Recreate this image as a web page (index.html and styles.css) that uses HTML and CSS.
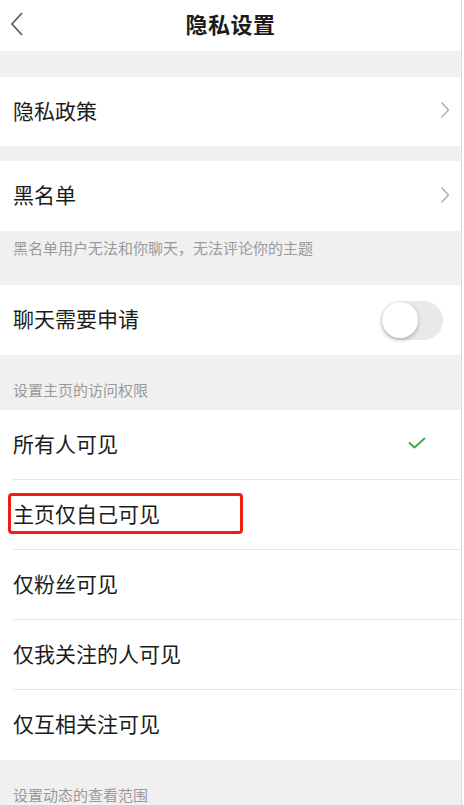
FILE: index.html
```html
<!DOCTYPE html>
<html lang="zh-CN">
<head>
    <meta charset="UTF-8">
    <meta name="viewport" content="width=device-width, initial-scale=1.0">
    <title>隐私设置</title>
    <link rel="stylesheet" href="styles.css">
</head>
<body>
    <div class="screen">
        <header class="nav-bar">
            <svg class="back" width="16" height="26" viewBox="0 0 16 26">
                <path d="M13 2 L3 13 L13 24" fill="none" stroke="#555" stroke-width="1.6"/>
            </svg>
            <h1>隐私设置</h1>
        </header>

        <div class="gap gap-top"></div>
        <div class="row row-first">
            <span class="label">隐私政策</span>
            <svg class="arrow" width="10" height="18" viewBox="0 0 10 18">
                <path d="M1.5 1.5 L8.5 9 L1.5 16.5" fill="none" stroke="#aaa" stroke-width="1.3"/>
            </svg>
        </div>

        <div class="gap gap-small"></div>
        <div class="row">
            <span class="label">黑名单</span>
            <svg class="arrow" width="10" height="18" viewBox="0 0 10 18">
                <path d="M1.5 1.5 L8.5 9 L1.5 16.5" fill="none" stroke="#aaa" stroke-width="1.3"/>
            </svg>
        </div>
        <div class="note note-tip">黑名单用户无法和你聊天，无法评论你的主题</div>

        <div class="row">
            <span class="label">聊天需要申请</span>
            <span class="switch"><span class="knob"></span></span>
        </div>

        <div class="note note-section">设置主页的访问权限</div>
        <ul class="options">
            <li class="row">
                <span class="label">所有人可见</span>
                <svg class="check" width="18" height="12" viewBox="0 0 18 12">
                    <path d="M1 5.5 L6.5 10.5 L17 1" fill="none" stroke="#2eaa4f" stroke-width="1.8"/>
                </svg>
            </li>
            <li class="row">
                <span class="label marked">主页仅自己可见</span>
            </li>
            <li class="row"><span class="label">仅粉丝可见</span></li>
            <li class="row"><span class="label">仅我关注的人可见</span></li>
            <li class="row"><span class="label">仅互相关注可见</span></li>
        </ul>

        <div class="note note-bottom">设置动态的查看范围</div>
    </div>
</body>
</html>
```

FILE: styles.css
```css
/* page */
body {
    margin: 0;
    background: #fff;
    font-family: "Noto Sans CJK SC", "Noto Sans", sans-serif;
    color: #1b1b1b;
}

.screen {
    width: 461px;
    height: 805px;
    overflow: hidden;
    background: #f0f0f0;
    border-right: 1px solid #d8d8d8;
}

/* top bar */
.nav-bar {
    height: 51px;
    background: #fff;
    display: flex;
    align-items: center;
    justify-content: center;
    position: relative;
}

.nav-bar h1 {
    margin: 0 0 6px;
    font-size: 22px;
    font-weight: 700;
    letter-spacing: 0.5px;
}

.nav-bar .back {
    position: absolute;
    left: 9px;
    top: 11px;
}

/* gaps and notes */
.gap-top {
    height: 26px;
}

.gap-small {
    height: 15px;
}

.note {
    color: #9a9a9a;
    font-size: 15px;
    padding-left: 13px;
    box-sizing: border-box;
}

.note-tip {
    height: 54px;
    padding-top: 6px;
}

.note-section {
    height: 55px;
    padding-top: 24px;
}

.note-bottom {
    height: 47px;
    padding-top: 24px;
}

/* rows */
.row {
    height: 70px;
    background: #fff;
    display: flex;
    align-items: center;
    justify-content: space-between;
    padding: 0 10px 3px 13px;
    box-sizing: border-box;
}

.row-first {
    height: 69px;
}

.label {
    font-size: 21px;
    line-height: 1;
}

.arrow {
    margin-right: 1px;
}

/* switch */
.switch {
    width: 62px;
    height: 39px;
    border-radius: 20px;
    background: #e9e9e9;
    position: relative;
    margin: 4px 8px 0 0;
}

.switch .knob {
    position: absolute;
    left: 1px;
    top: 1px;
    width: 36px;
    height: 36px;
    border-radius: 50%;
    background: #fff;
    box-shadow: 0 2px 4px rgba(0, 0, 0, 0.25);
}

/* list of options */
.options {
    list-style: none;
    margin: 0;
    padding: 0;
    background: #fff;
}

.options .row {
    padding-left: 0;
    margin-left: 13px;
    border-bottom: 1px solid #e6e6e6;
}

.options .row:last-child {
    border-bottom: none;
}

.check {
    margin-right: 25px;
}

/* red marker box */
.marked {
    position: relative;
}

.marked::after {
    content: "";
    position: absolute;
    left: -5px;
    top: -10px;
    width: 229px;
    height: 35px;
    border: 3px solid #f01d14;
    border-radius: 4px;
}
```
